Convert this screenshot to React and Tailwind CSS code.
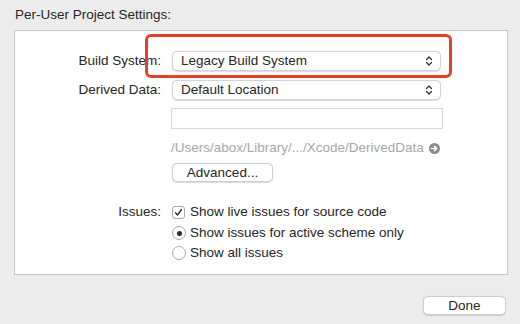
const font = { fontFamily: '"Liberation Sans", Arial, sans-serif' };

function Chevrons() {
    return (
        <svg width="8" height="12" viewBox="0 0 8 12" fill="none" stroke="#333" strokeWidth="1.3" strokeLinecap="round" strokeLinejoin="round">
            <path d="M1.5 4.5 L4 2 L6.5 4.5" />
            <path d="M1.5 7.5 L4 10 L6.5 7.5" />
        </svg>
    );
}

function Popup({ label }) {
    return (
        <div className="flex h-[20px] w-[269px] items-center justify-between rounded-[5px] border border-[#d4d4d4] bg-white pl-[8px] pr-[7px] shadow-[0_0.5px_1px_rgba(0,0,0,0.15)]">
            <span className="text-[13.5px] text-[#262626]">{label}</span>
            <Chevrons />
        </div>
    );
}

function Row({ label, children, className = '' }) {
    return (
        <div className={`flex items-center ${className}`}>
            <div className="w-[157px] shrink-0 pr-[11px] text-right text-[13.5px] text-[#262626]">{label}</div>
            {children}
        </div>
    );
}

export default function App() {
    return (
        <div className="flex h-[324px] w-[520px] flex-col bg-[#ececec] px-[14px] pt-[7px] leading-[16px]" style={font}>
            <div className="pl-[1px] text-[13.5px] text-[#262626]">Per-User Project Settings:</div>

            <div className="relative mt-[7px] h-[245px] w-[494px] border border-[#c4c4c4] bg-white pt-[20px]">
                {/* red highlight around build system */}
                <div className="pointer-events-none absolute left-[130px] top-[3px] h-[44px] w-[307px] rounded-[6px] border-[3px] border-[#e6402a]" />

                <Row label="Build System:">
                    <Popup label="Legacy Build System" />
                </Row>
                <Row label="Derived Data:" className="mt-[9px]">
                    <Popup label="Default Location" />
                </Row>

                <div className="ml-[156px] mt-[8px] h-[21px] w-[272px] border border-[#d8d8d8] bg-white" />

                <div className="ml-[156px] mt-[11px] flex h-[16px] items-center gap-[5px]">
                    <span className="text-[13.5px] text-[#a8a8a8]">/Users/abox/Library/.../Xcode/DerivedData</span>
                    <svg width="11" height="11" viewBox="0 0 11 11">
                        <circle cx="5.5" cy="5.5" r="5.5" fill="#8c8c8c" />
                        <path d="M2.5 5.5 H7.5 M5.5 3.3 L7.7 5.5 L5.5 7.7" stroke="#fff" strokeWidth="1.5" fill="none" strokeLinecap="round" strokeLinejoin="round" />
                    </svg>
                </div>

                <div className="ml-[157px] mt-[7px] flex h-[19px] w-[101px] items-center justify-center rounded-[5px] border border-[#cfcfcf] bg-white text-[13.5px] text-[#262626] shadow-[0_0.5px_1px_rgba(0,0,0,0.15)]">
                    Advanced...
                </div>

                <Row label="Issues:" className="mt-[22px] h-[16px]">
                    <div className="flex items-center gap-[5px]">
                        <div className="flex h-[13px] w-[13px] items-center justify-center rounded-[3px] border border-[#a9a9a9] bg-white">
                            <svg width="9" height="9" viewBox="0 0 9 9" fill="none" stroke="#2a2a2a" strokeWidth="1.3" strokeLinecap="round" strokeLinejoin="round">
                                <path d="M1.5 4.8 L3.5 7 L7.5 1.5" />
                            </svg>
                        </div>
                        <span className="text-[13.5px] text-[#262626]">Show live issues for source code</span>
                    </div>
                </Row>
                <div className="ml-[157px] mt-[5px] flex h-[16px] items-center gap-[4px]">
                    <div className="flex h-[14px] w-[14px] items-center justify-center rounded-full border border-[#a9a9a9] bg-white">
                        <div className="h-[5px] w-[5px] rounded-full bg-[#2a2a2a]" />
                    </div>
                    <span className="text-[13.5px] text-[#262626]">Show issues for active scheme only</span>
                </div>
                <div className="ml-[157px] mt-[4px] flex h-[16px] items-center gap-[4px]">
                    <div className="h-[14px] w-[14px] rounded-full border border-[#a9a9a9] bg-white" />
                    <span className="text-[13.5px] text-[#262626]">Show all issues</span>
                </div>
            </div>

            <div className="mt-[21px] flex justify-end">
                <div className="flex h-[19px] w-[83px] items-center justify-center rounded-[5px] border border-[#cfcfcf] bg-white text-[13.5px] text-[#262626] shadow-[0_0.5px_1px_rgba(0,0,0,0.15)]">
                    Done
                </div>
            </div>
        </div>
    );
}
